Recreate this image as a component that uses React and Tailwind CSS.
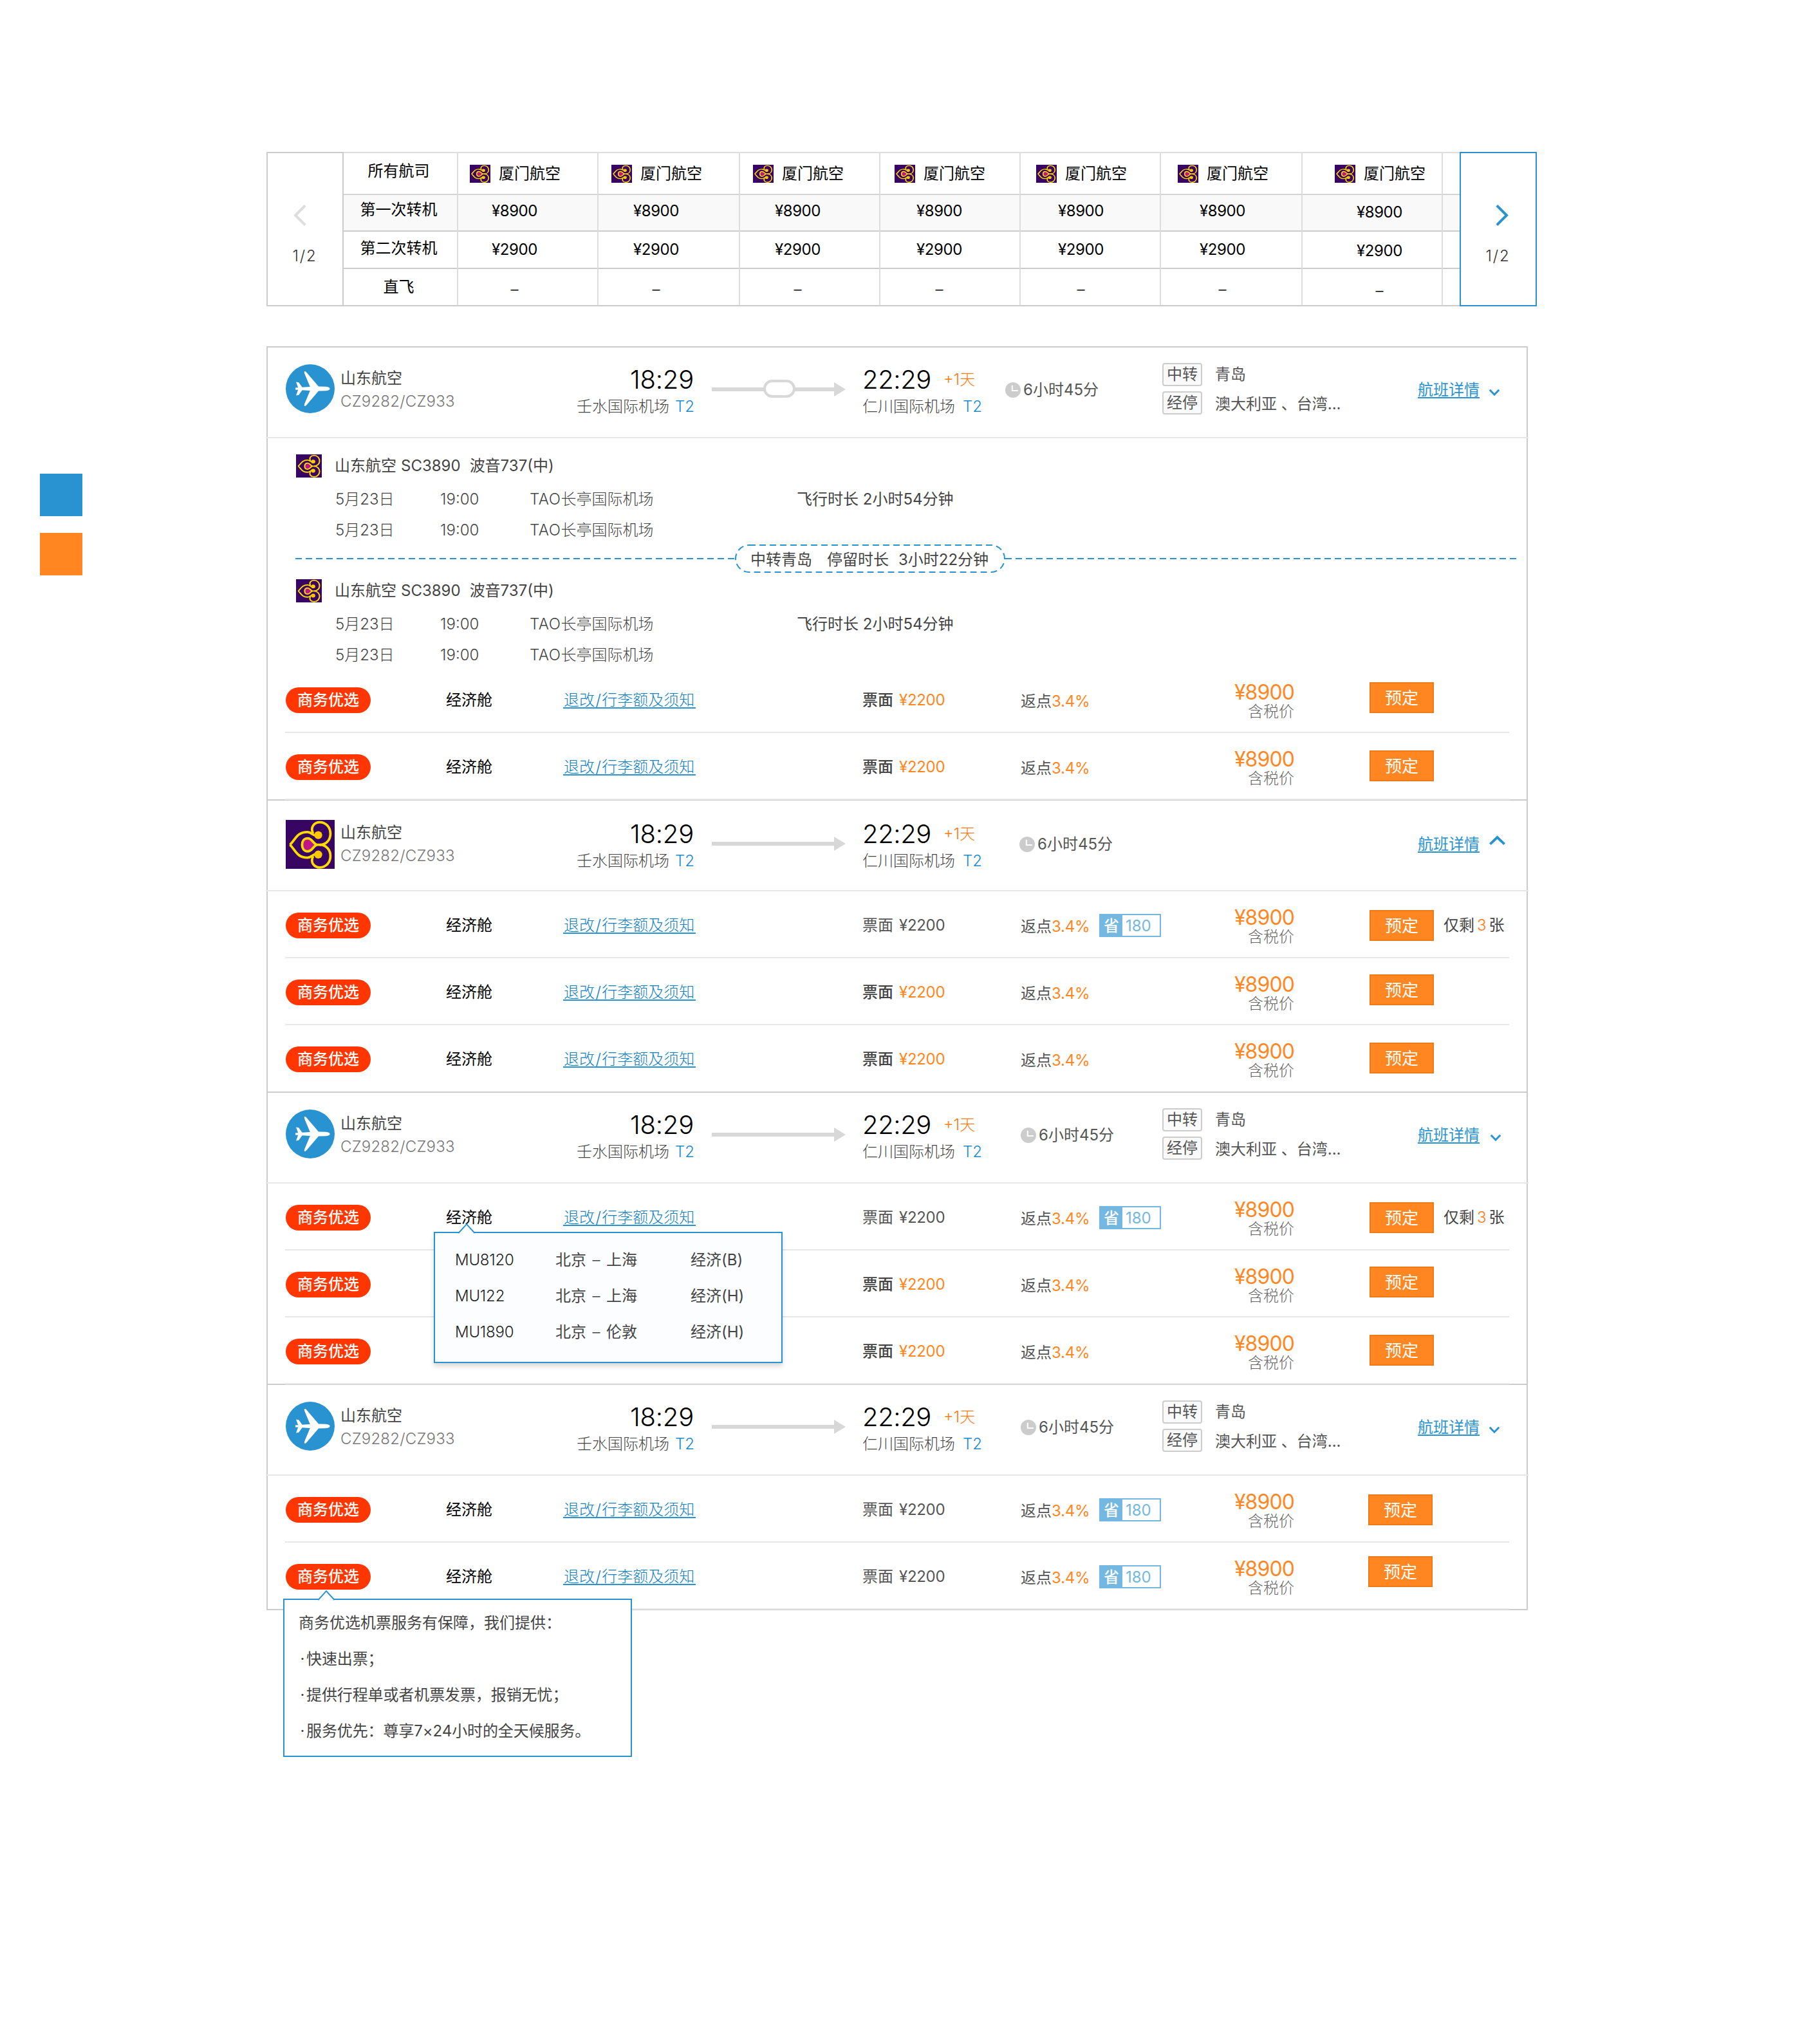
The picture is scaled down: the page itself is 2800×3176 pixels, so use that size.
import React from "react";

const FONT = "font-['Inter','Noto_Sans_CJK_SC',sans-serif]";

function LotusLogo({ className }) {
  return (
    <svg viewBox="0 0 76 76" preserveAspectRatio="none" className={className}>
      <rect width="76" height="76" fill="#380662" />
      <g fill="none" stroke="#ffdc00" strokeWidth="3.8" strokeLinejoin="round">
        <path d="M6.5 38.7C15 31 17 18.5 34 18.8C41 19 42 26 50 24" />
        <path d="M6.5 38.7C15 46.4 17 58.9 34 58.6C41 58.4 42 51.4 50 53.4" />
        <path d="M42.5 21C37.5 11 44.5 3.6 53 3.6C63 3.6 69.4 12 69.4 21.5C69.4 31 63 38.4 53 38.7H44" />
        <path d="M42.5 56.4C37.5 66.4 44.5 73.8 53 73.8C63 73.8 69.4 65.4 69.4 55.9C69.4 46.4 63 39 53 38.7" />
        <path d="M48 38.7C42 36 41 28.6 34 28.6C28.5 28.6 25.4 33 25.4 38.7C25.4 44.4 28.5 48.8 34 48.8C41 48.8 42 41.4 48 38.7Z" fill="#c0168a" />
      </g>
      <circle cx="50.5" cy="23.6" r="6.2" fill="#ffc800" />
      <circle cx="50.5" cy="53.8" r="6.2" fill="#ffc800" />
    </svg>
  );
}

function PlaneLogo({ className }) {
  return (
    <svg viewBox="0 0 76 76" className={className}>
      <circle cx="38" cy="38" r="38" fill="#2993d1" />
      <path
        fill="#fff"
        d="M68.5 38C68.5 35.8 65.5 35 62 34.8L51 34.6L33 13.6C31.6 11.6 30.6 11 29 11C28.6 12.4 28.9 13.4 29.4 15L37.8 35L25.6 35.8L20.2 28.2L16 27.4L19.2 36.2L15 36.6V39.4L19.2 39.8L16 48.6L20.2 47.8L25.6 40.2L37.8 41L29.4 61C28.9 62.6 28.6 63.6 29 65C30.6 65 31.6 64.4 33 62.4L51 41.4L62 41.2C65.5 41 68.5 40.2 68.5 38Z"
      />
    </svg>
  );
}

function RouteArrow({ stop }) {
  return (
    <svg viewBox="0 0 208 28" className="ml-[27px] mt-[50px] h-[28px] w-[208px] shrink-0">
      <path d="M0 12H190V4L208 15L190 26V18H0Z" fill="#d8d8d8" />
      {stop && <rect x="82" y="2" width="46" height="24" rx="12" fill="#fff" stroke="#d8d8d8" strokeWidth="4" />}
    </svg>
  );
}

function Clock() {
  return (
    <svg viewBox="0 0 24 24" className="mt-[2px] h-[24px] w-[24px] shrink-0">
      <circle cx="12" cy="12" r="12" fill="#ccc" />
      <path d="M10.8 4.7V13H19.8" fill="none" stroke="#fff" strokeWidth="2" />
    </svg>
  );
}

function ChevronDown() {
  return (
    <svg viewBox="0 0 16 10" className="mt-[65px] h-[10px] w-[16px] overflow-visible">
      <path d="M0.8 0.8L8 8.2L15.2 0.8" fill="none" stroke="#2993d1" strokeWidth="3" />
    </svg>
  );
}

function ChevronUp() {
  return (
    <svg viewBox="0 0 25 14" className="mt-[53px] h-[14px] w-[25px] overflow-visible">
      <path d="M1.4 12.6L12.5 2L23.6 12.6" fill="none" stroke="#2993d1" strokeWidth="4" />
    </svg>
  );
}

/* ---------- airline comparison table ---------- */

const airlineColumns = [
  { width: "w-[218px]", indent: "pl-[18px]" },
  { width: "w-[220px]", indent: "pl-[20px]" },
  { width: "w-[218px]", indent: "pl-[20px]" },
  { width: "w-[218px]", indent: "pl-[22px]" },
  { width: "w-[218px]", indent: "pl-[24px]" },
  { width: "w-[220px]", indent: "pl-[26px]" },
  { width: "w-[218px]", indent: "pl-[50px]", drop: true },
  { width: "w-[28px]", empty: true },
];

function HeaderRule() {
  return (
    <div className="h-[2px]">
      <div className="h-px bg-[#ddd]" />
      <div className="h-px bg-[#ccc]" />
    </div>
  );
}

function AirlineColumn({ width, indent, drop, empty }) {
  return (
    <div className={`${width} shrink-0 border-l-2 border-[#ddd]`}>
      <div className={`flex h-[63px] pt-[18px] ${indent || ""}`}>
        {!empty && (
          <>
            <LotusLogo className="h-[28px] w-[32px] shrink-0" />
            <span className="ml-[13px] whitespace-nowrap">厦门航空</span>
          </>
        )}
      </div>
      <HeaderRule />
      <div className={`h-[57px] border-b-2 border-[#ccc] bg-[#f9f9f9] ${drop ? "pt-[13px]" : "pt-[11px]"} ${indent || ""}`}>
        {!empty && <div className="w-[139px] text-center tracking-[-0.4px]">¥8900</div>}
      </div>
      <div className={`h-[58px] border-b-2 border-[#ccc] ${drop ? "pt-[16px]" : "pt-[14px]"} ${indent || ""}`}>
        {!empty && <div className="w-[139px] text-center tracking-[-0.4px]">¥2900</div>}
      </div>
      <div className={`h-[56px] ${drop ? "pt-[20px]" : "pt-[18px]"} ${indent || ""}`}>
        {!empty && <div className="w-[139px] text-center font-light">–</div>}
      </div>
    </div>
  );
}

function AirlineTable() {
  return (
    <div className="flex h-[240px] text-[24px] leading-[28px] text-black">
      <div className="w-[120px] shrink-0 border-2 border-[#ccc] pt-[80px]">
        <svg viewBox="0 0 20 33" className="ml-[40px] h-[33px] w-[20px]">
          <path d="M18.2 1.4L3 16.5L18.2 31.6" fill="none" stroke="#ddd" strokeWidth="4" />
        </svg>
        <div className="mt-[33px] pr-[1px] text-center font-light tracking-[1.8px] text-[#333]">1/2</div>
      </div>
      <div className="flex w-[1734px] shrink-0 overflow-hidden border-b-2 border-t-2 border-b-[#ccc] border-t-[#ddd]">
        <div className="w-[176px] shrink-0 text-center">
          <div className="h-[63px] pr-[5px] pt-[14px]">所有航司</div>
          <HeaderRule />
          <div className="h-[57px] border-b-2 border-[#ccc] bg-[#f9f9f9] pr-[5px] pt-[9px]">第一次转机</div>
          <div className="h-[58px] border-b-2 border-[#ccc] pr-[5px] pt-[12px]">第二次转机</div>
          <div className="h-[56px] pr-[5px] pt-[14px]">直飞</div>
        </div>
        {airlineColumns.map((c, i) => (
          <AirlineColumn key={i} {...c} />
        ))}
      </div>
      <div className="w-[120px] shrink-0 border-2 border-[#2993d1] pt-[80px]">
        <svg viewBox="0 0 20 33" className="ml-[54px] h-[33px] w-[20px]">
          <path d="M1.8 1.4L17 16.5L1.8 31.6" fill="none" stroke="#2993d1" strokeWidth="4" />
        </svg>
        <div className="mt-[33px] pr-[1px] text-center font-light tracking-[1.8px] text-[#333]">1/2</div>
      </div>
    </div>
  );
}

/* ---------- flight header ---------- */

function Tag({ children }) {
  return (
    <span className="flex h-[36px] w-[62px] shrink-0 items-center justify-center rounded-[4px] border-2 border-[#ccc] bg-[#fafafa]">
      {children}
    </span>
  );
}

function FlightHeader({ logo, stop, indent, transfers, open, chevron }) {
  return (
    <div className={`relative z-10 -mx-[3px] flex h-[141px] items-start border-b-2 border-[#e8e8e8] pl-[3px] ${open ? "pt-[2px]" : ""}`}>
      {logo === "lotus" ? (
        <LotusLogo className="ml-[28px] mt-[28px] h-[76px] w-[76px] shrink-0" />
      ) : (
        <PlaneLogo className="ml-[28px] mt-[26px] h-[76px] w-[76px] shrink-0" />
      )}
      <div className="ml-[9px] mt-[34px] w-[200px] shrink-0">
        <div className="text-[#444]">山东航空</div>
        <div className="mt-[8px] font-light tracking-[0.2px] text-[#777]">CZ9282/CZ933</div>
      </div>
      <div className="ml-[150px] mt-[30px] w-[200px] shrink-0">
        <div className="pr-[1px] text-right text-[40px] font-light leading-[40px] tracking-[-0.2px] text-black">18:29</div>
        <div className="mt-[8px] flex justify-end gap-[9px] font-light text-[#444]">
          <span>壬水国际机场</span>
          <span className="text-[#1b8ace]">T2</span>
        </div>
      </div>
      <RouteArrow stop={stop} />
      <div className="ml-[26px] mt-[30px] w-[222px] shrink-0">
        <div className="flex leading-[40px]">
          <span className="w-[126px] text-[40px] font-light tracking-[-0.4px] text-black">22:29</span>
          <span className="font-light text-[#ff7a10]">+1天</span>
        </div>
        <div className="mt-[8px] flex gap-[12px] font-light text-[#444]">
          <span>仁川国际机场</span>
          <span className="text-[#1b8ace]">T2</span>
        </div>
      </div>
      <div className={`mt-[52px] flex w-[244px] shrink-0 gap-[4px] text-[#555] ${indent}`}>
        <Clock />
        <span>6小时45分</span>
      </div>
      <div className="mt-[24px] flex w-[397px] shrink-0 flex-col gap-[8px] text-[#555]">
        {transfers && (
          <>
            <div className="flex gap-[20px]">
              <Tag>中转</Tag>
              <span className="leading-[36px]">青岛</span>
            </div>
            <div className="flex gap-[20px]">
              <Tag>经停</Tag>
              <span className="leading-[39px]">澳大利亚 、台湾...</span>
            </div>
          </>
        )}
      </div>
      <a className="mt-[51px] h-[28px] w-[96px] shrink-0 whitespace-nowrap border-b-2 border-[#2993d1] leading-[30px] text-[#2993d1]">航班详情</a>
      <div className={`shrink-0 ${chevron}`}>{open ? <ChevronUp /> : <ChevronDown />}</div>
    </div>
  );
}

/* ---------- itinerary of the expanded flight ---------- */

function Leg() {
  const stopRow = (
    <>
      <span className="w-[163px]">5月23日</span>
      <span className="w-[139px]">19:00</span>
      <span className="w-[415px]">
        <span className="tracking-[0.5px]">TAO</span>长亭国际机场
      </span>
    </>
  );
  return (
    <div>
      <div className="flex h-[36px] text-[#444]">
        <LotusLogo className="ml-[44px] h-[36px] w-[40px] shrink-0" />
        <div className="ml-[20px] flex leading-[35px]">
          <span>山东航空</span>
          <span className="ml-[7px]">SC3890</span>
          <span className="ml-[14px]">波音737(中)</span>
        </div>
      </div>
      <div className="ml-[105px] mt-[20px] flex font-light text-[#444]">
        {stopRow}
        <span className="font-normal text-[#444]">飞行时长 2小时54分钟</span>
      </div>
      <div className="ml-[105px] mt-[20px] flex font-light text-[#444]">{stopRow}</div>
    </div>
  );
}

function DashedRule({ className }) {
  return (
    <div
      className={`h-[2px] bg-[repeating-linear-gradient(90deg,#2993d1_0px,#2993d1_10px,transparent_10px,transparent_16px)] ${className}`}
    />
  );
}

function Itinerary() {
  return (
    <div className="h-[354px] pt-[25px]">
      <Leg />
      <div className="ml-[43px] mt-[8px] flex h-[44px] w-[1898px]">
        <DashedRule className="mt-[21px] w-[683px]" />
        <div className="relative flex h-[44px] w-[420px] items-center whitespace-nowrap pl-[24px] pt-[3px] text-[#444]">
          <svg viewBox="0 0 420 44" className="absolute inset-0 h-[44px] w-[420px]">
            <rect x="1" y="1" width="418" height="42" rx="21" fill="none" stroke="#2993d1" strokeWidth="2" strokeDasharray="10 6" />
          </svg>
          <span>中转青岛</span>
          <span className="ml-[23px]">停留时长</span>
          <span className="ml-[15px]">3小时22分钟</span>
        </div>
        <DashedRule className="mt-[21px] flex-1" />
      </div>
      <div className="mt-[10px]">
        <Leg />
      </div>
    </div>
  );
}

/* ---------- fare rows ---------- */

function Pointer({ className, fill }) {
  return (
    <svg viewBox="0 0 26 17" className={`absolute -top-[15px] h-[17px] w-[26px] ${className}`}>
      <path d="M1 15L13 1.5L25 15V17H1Z" fill={fill} />
      <path d="M0.4 15L13 1.2L25.6 15" fill="none" stroke="#2993d1" strokeWidth="2" />
    </svg>
  );
}

function CabinPopup() {
  const rows = [
    ["MU8120", "上海", "经济(B)"],
    ["MU122", "上海", "经济(H)"],
    ["MU1890", "伦敦", "经济(H)"],
  ];
  return (
    <div className="absolute left-[231px] top-[75px] z-30 h-[204px] w-[542px] border-2 border-[#2993d1] bg-[#fcfdff] pl-[31px] pt-[14px] leading-[56px] text-[#444] shadow-[0_5px_7px_rgba(0,0,0,0.15)]">
      <Pointer className="left-[36px]" fill="#fcfdff" />
      {rows.map(([code, to, cabin]) => (
        <div key={code} className="flex">
          <span className="w-[156px] font-light tracking-[-0.2px] text-[#222]">{code}</span>
          <span className="flex w-[210px]">
            <span>北京</span>
            <span className="w-[31px] text-center font-light">–</span>
            <span>{to}</span>
          </span>
          <span>{cabin}</span>
        </div>
      ))}
    </div>
  );
}

function ServicePopup() {
  const items = ["快速出票；", "提供行程单或者机票发票，报销无忧；", "服务优先：尊享7×24小时的全天候服务。"];
  return (
    <div className="absolute -left-[3px] top-[87px] z-30 h-[246px] w-[542px] whitespace-nowrap border-2 border-[#2993d1] bg-white pl-[22px] pt-[8px] leading-[56px] text-[#444]">
      <Pointer className="left-[52px]" fill="#fff" />
      <div>商务优选机票服务有保障，我们提供：</div>
      {items.map((t) => (
        <div key={t} className="flex">
          <span className="w-[12px] text-center">·</span>
          <span className="tracking-[-0.1px]">{t}</span>
        </div>
      ))}
    </div>
  );
}

function FareRow({ saving, left, button = "ml-[117px] mt-[27px]", last, rule = "border-[#e8e8e8]", popup, covered }) {
  return (
    <div className={`relative mx-[27px] flex h-[104px] items-start border-b-2 ${rule} ${last ? "-mb-px" : ""} ${popup ? "z-20" : "z-10"}`}>
      <span className="ml-[1px] mt-[33px] flex h-[40px] w-[132px] shrink-0 items-center justify-center rounded-[20px] bg-[#ff3600] font-medium text-white">
        商务优选
      </span>
      <div className="ml-[117px] mt-[38px] flex w-[388px] shrink-0">
        {!covered && (
          <>
            <span className="w-[182px] leading-[30px] text-black">经济舱</span>
            <a className="h-[28px] w-[206px] whitespace-nowrap border-b-2 border-[#2993d1] pl-[1px] font-light leading-[29px] text-[#0f7fc4]">
              退改<span className="px-[1.5px]">/</span>行李额及须知
            </a>
          </>
        )}
      </div>
      <div className="ml-[259px] mt-[39px] flex w-[246px] shrink-0 gap-[9px]">
        <span className={saving ? "text-[#555]" : "font-medium text-[#444]"}>票面</span>
        <span className={`tracking-[-0.3px] ${saving ? "text-[#555]" : "text-[#ff8621]"}`}>¥2200</span>
      </div>
      <div className="mt-[41px] w-[122px] shrink-0 whitespace-nowrap text-[#555]">
        返点<span className="tracking-[-0.2px] text-[#ff8621]">3.4%</span>
      </div>
      <div className="mt-[35px] w-[96px] shrink-0">
        {saving && (
          <div className="flex h-[36px] border-2 border-[#74b7e0] leading-[33px]">
            <span className="w-[34px] bg-[#74b7e0] text-center font-medium text-white">省</span>
            <span className="ml-[5px] text-[#74b7e0]">180</span>
          </div>
        )}
      </div>
      <div className="mt-[25px] w-[207px] shrink-0 text-right">
        <div className="text-[32px] leading-[32px] tracking-[-0.9px] text-[#ff8621]">¥8900</div>
        <div className="font-light text-[#666]">含税价</div>
      </div>
      <button className={`flex h-[48px] w-[100px] shrink-0 items-center justify-center border-2 border-[#ee7a18] bg-[#ff8621] pt-[1px] text-[26px] text-white ${button}`}>
        预定
      </button>
      {left && (
        <div className="ml-[15px] mt-[39px] flex shrink-0 gap-[4px] text-[#444]">
          <span>仅剩</span>
          <span className="font-light text-[#ff7a10]">3</span>
          <span>张</span>
        </div>
      )}
      {popup}
    </div>
  );
}

export default function App() {
  return (
    <div className={`flex h-[3176px] w-[2800px] overflow-hidden bg-white text-[24px] leading-[28px] ${FONT}`}>
      <div className="flex w-[414px] shrink-0 flex-col gap-[26px] pl-[62px] pt-[736px]">
        <div className="h-[66px] w-[66px] bg-[#2993d1]" />
        <div className="h-[66px] w-[66px] bg-[#ff8621]" />
      </div>
      <div className="pt-[236px]">
        <AirlineTable />
        <div className="mt-[62px] w-[1960px] border-2 border-[#ccc]">
          <section>
            <FlightHeader logo="plane" stop transfers indent="" chevron="ml-[15px]" />
            <Itinerary />
            <FareRow button="ml-[117px] mt-[25px]" />
            <FareRow last />
          </section>
          <section className="border-t-2 border-[#ccc]">
            <FlightHeader logo="lotus" open indent="pl-[22px]" chevron="ml-[15px]" />
            <FareRow saving left button="ml-[117px] mt-[29px]" />
            <FareRow button="ml-[117px] mt-[25px]" />
            <FareRow last rule="border-transparent" />
          </section>
          <section className="border-t-2 border-[#ccc]">
            <FlightHeader logo="plane" transfers indent="pl-[24px]" chevron="ml-[17px]" />
            <FareRow saving left button="ml-[117px] mt-[29px]" popup={<CabinPopup />} />
            <FareRow covered button="ml-[117px] mt-[25px]" />
            <FareRow covered last />
          </section>
          <section className="border-t-2 border-[#ccc]">
            <FlightHeader logo="plane" transfers indent="pl-[24px]" chevron="ml-[15px]" />
            <FareRow saving button="ml-[115px] mt-[29px]" />
            <FareRow saving last button="ml-[115px] mt-[21px]" popup={<ServicePopup />} />
          </section>
        </div>
      </div>
    </div>
  );
}
